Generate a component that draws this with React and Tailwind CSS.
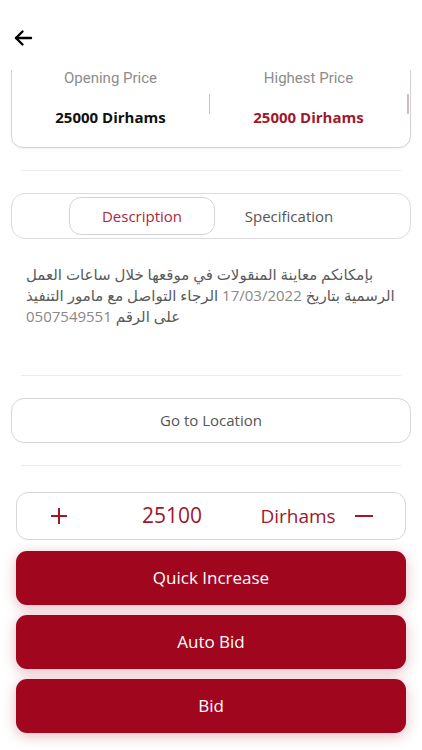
import React from "react";

const MONT = { fontFamily: '"Open Sans", "DejaVu Sans", sans-serif' };

export default function App() {
  return (
    <div className="w-[422px] h-[750px] bg-white flex flex-col overflow-hidden" style={MONT}>
      <div className="h-[70px] shrink-0 flex items-start pl-[13px] pt-[28px] bg-white relative z-10">
        <svg width="20" height="20" viewBox="0 0 20 20" fill="none" stroke="#000" strokeWidth="2.4" strokeLinecap="round" strokeLinejoin="round">
          <path d="M18 10H3" />
          <path d="M9.5 3.5L3 10l6.5 6.5" />
        </svg>
      </div>
      <div className="flex-1 flex flex-col overflow-hidden">
        <div className="-mt-[11px] mx-[11px] border border-[#d6d0d1] rounded-[12px] flex shadow-[0_1px_2px_rgba(0,0,0,0.06)]">
          <div className="flex-1 flex flex-col items-center pt-[12px] pb-[20px]">
            <div className="leading-[12px] text-[15px] text-[#8c8c8c]" style={{ fontFamily: 'Roboto, sans-serif' }}>Opening Price</div>
            <div className="mt-[23px] leading-[20px] text-[15px] font-bold text-[#111]">25000 Dirhams</div>
          </div>
          <div className="w-px h-[20px] mt-[34px] bg-[#c9bfc1]" />
          <div className="flex-1 flex flex-col items-center pt-[12px] pb-[20px]">
            <div className="leading-[12px] text-[15px] text-[#8c8c8c]" style={{ fontFamily: 'Roboto, sans-serif' }}>Highest Price</div>
            <div className="mt-[23px] leading-[20px] text-[15px] font-bold text-[#a0182c]">25000 Dirhams</div>
          </div>
          <div className="w-[2px] h-[20px] mt-[34px] mr-px bg-[#c9bfc1]" />
        </div>

        <div className="mt-[22px] mx-[21px] h-px bg-[#ececec]" />

        <div className="mt-[22px] mx-[11px] h-[46px] border border-[#dcdcdc] rounded-[14px] flex items-center pl-[57px]">
          <div className="w-[146px] h-[38px] border border-[#d4d4d4] rounded-[12px] flex items-center justify-center text-[15px] text-[#b0253f]">
            Description
          </div>
          <div className="w-[148px] flex items-center justify-center text-[15px] text-[#555]">
            Specification
          </div>
        </div>

        <div className="mt-[25px] px-[26px] text-[15px] leading-[21px] text-[#5a5a5a]">
          <div dir="rtl" className="text-left">بإمكانكم معاينة المنقولات في موقعها خلال ساعات العمل</div>
          <div dir="rtl" className="text-left">الرسمية بتاريخ <span className="text-[#888]">17/03/2022</span> الرجاء التواصل مع مامور التنفيذ</div>
          <div dir="rtl" className="text-left">على الرقم <span className="text-[#888]">0507549551</span></div>
        </div>

        <div className="mt-[48px] mx-[21px] h-px bg-[#ececec]" />

        <div className="mt-[22px] mx-[11px] h-[45px] border border-[#d6d6d6] rounded-[13px] flex items-center justify-center text-[15px] text-[#555]">
          Go to Location
        </div>

        <div className="mt-[22px] mx-[21px] h-px bg-[#ececec]" />

        <div className="mt-[26px] mx-[16px] h-[48px] border border-[#d6d6d6] rounded-[12px] flex items-center text-[#a0162b]">
          <div className="w-[83px] flex justify-center">
            <svg width="18" height="18" viewBox="0 0 18 18" fill="none" stroke="#a0162b" strokeWidth="2">
              <path d="M9 1v16M1 9h16" />
            </svg>
          </div>
          <div className="w-[144px] text-center text-[21px]">25100</div>
          <div className="w-[108px] text-center text-[19px]">Dirhams</div>
          <div className="w-[24px] flex justify-center">
            <svg width="18" height="4" viewBox="0 0 18 4" fill="none" stroke="#a0162b" strokeWidth="2">
              <path d="M0 2h18" />
            </svg>
          </div>
        </div>

        <div className="mt-[11px] mx-[16px] flex flex-col gap-[10px]">
          {["Quick Increase", "Auto Bid", "Bid"].map((t) => (
            <div key={t} className="h-[54px] rounded-[11px] bg-[#a1061f] text-white text-[17px] flex items-center justify-center shadow-[0_3px_14px_rgba(161,6,31,0.28)]">
              {t}
            </div>
          ))}
        </div>
      </div>
    </div>
  );
}
